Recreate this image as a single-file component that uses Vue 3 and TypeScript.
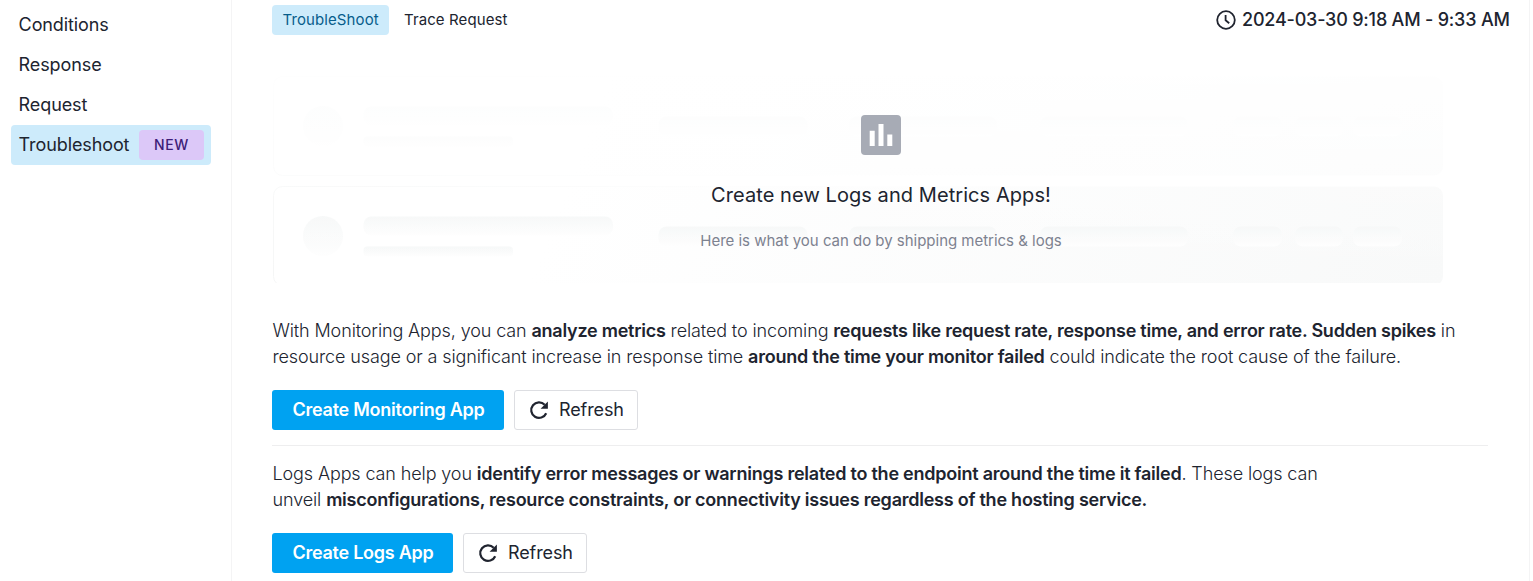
<script setup lang="ts">
interface NavItem {
  label: string
  active?: boolean
  badge?: string
}

const navItems: NavItem[] = [
  { label: 'Conditions' },
  { label: 'Response' },
  { label: 'Request' },
  { label: 'Troubleshoot', active: true, badge: 'NEW' },
]

const rows: number[] = [76.5, 186.5]
</script>

<template>
  <div class="page">
    <nav class="sidebar">
      <a v-for="item in navItems" :key="item.label" class="nav-item" :class="{ active: item.active }">
        <span class="nav-label">{{ item.label }}</span>
        <span v-if="item.badge" class="badge">{{ item.badge }}</span>
      </a>
    </nav>
    <main class="main">
      <header class="topbar">
        <div class="tabs">
          <a class="tab active">TroubleShoot</a>
          <a class="tab">Trace Request</a>
        </div>
        <div class="period">
          <svg class="clock" viewBox="0 0 20 20" fill="none" stroke="currentColor" stroke-width="1.8">
            <circle cx="10" cy="10" r="8.8" />
            <path d="M9.6 5v5.3l3.6 3" />
          </svg>
          <span>2024-03-30 9:18 AM - 9:33 AM</span>
        </div>
      </header>

      <section class="banner">
        <svg class="skeleton" viewBox="272 75 1216 208">
          <defs>
            <linearGradient id="bar" x1="0" y1="0" x2="0" y2="1">
              <stop offset="0" stop-color="#f5f7f7" />
              <stop offset="1" stop-color="#fefefe" />
            </linearGradient>
            <linearGradient id="shade" x1="600" y1="100" x2="1400" y2="420" gradientUnits="userSpaceOnUse">
              <stop offset="0" stop-color="#f8f9f9" stop-opacity="0" />
              <stop offset="1" stop-color="#f8f9f9" />
            </linearGradient>
            <linearGradient id="fade" x1="0" y1="75" x2="0" y2="283" gradientUnits="userSpaceOnUse">
              <stop offset="0" stop-color="#fff" stop-opacity="0.9" />
              <stop offset="0.5" stop-color="#fff" stop-opacity="0.62" />
              <stop offset="0.54" stop-color="#fff" stop-opacity="0.3" />
              <stop offset="1" stop-color="#fff" stop-opacity="0" />
            </linearGradient>
            <linearGradient id="edge" x1="0" y1="0" x2="1" y2="0">
              <stop offset="0" stop-color="#f5f6f6" />
              <stop offset="0.5" stop-color="#f5f6f6" stop-opacity="0" />
            </linearGradient>
          </defs>
          <g v-for="y in rows" :key="y">
            <rect x="273.5" :y="y" width="1169.5" height="99" rx="9" fill="url(#shade)" stroke="url(#edge)" />
            <circle cx="323" :cy="y + 49.5" r="20" fill="url(#bar)" />
            <rect x="363.5" :y="y + 30" width="249.5" height="19" rx="8" fill="url(#bar)" />
            <rect x="363.5" :y="y + 60" width="149.5" height="10" rx="4" fill="url(#bar)" />
            <rect x="658.5" :y="y + 40" width="149" height="20" rx="8" fill="url(#bar)" />
            <rect x="849" :y="y + 40" width="148" height="20" rx="8" fill="url(#bar)" />
            <rect x="1040" :y="y + 40" width="148" height="20" rx="8" fill="url(#bar)" />
            <rect x="1233" :y="y + 40" width="49" height="20" rx="8" fill="url(#bar)" />
            <rect x="1295" :y="y + 40" width="48" height="20" rx="8" fill="url(#bar)" />
            <rect x="1353" :y="y + 40" width="49" height="20" rx="8" fill="url(#bar)" />
          </g>
          <rect x="272" y="75" width="1216" height="208" fill="url(#fade)" />
        </svg>
        <div class="banner-content">
          <svg class="chart" viewBox="0 0 40 40">
            <rect width="40" height="40" rx="4" fill="#a7abb5" />
            <path d="M8.7 15.7h5V31h-5zM17.5 9h5v22h-5zM26.3 19.6h5V31h-5z" fill="#fff" />
          </svg>
          <h2>Create new Logs and Metrics Apps!</h2>
          <p>Here is what you can do by shipping metrics &amp; logs</p>
        </div>
      </section>

      <section class="block monitoring">
        <p>
          With Monitoring Apps, you can <b>analyze metrics</b> related to incoming
          <b>requests like request rate, response time, and error rate. Sudden spikes</b> in<br />
          resource usage or a significant increase in response time
          <b>around the time your monitor failed</b> could indicate the root cause of the failure.
        </p>
        <div class="actions">
          <button class="primary wide">Create Monitoring App</button>
          <button class="secondary">
            <svg viewBox="0 0 20 20"><path d="M17.2 13.2A7.8 7.8 0 1 1 15.7 4.7" fill="none" stroke="currentColor" stroke-width="2.2" /><path d="M18.9 1.4v7.3h-7.3z" fill="currentColor" /></svg>
            <span>Refresh</span>
          </button>
        </div>
      </section>

      <section class="block logs">
        <p>
          Logs Apps can help you
          <b>identify error messages or warnings related to the endpoint around the time it failed</b>. These logs can<br />
          unveil <b>misconfigurations, resource constraints, or connectivity issues regardless of the hosting service.</b>
        </p>
        <div class="actions">
          <button class="primary">Create Logs App</button>
          <button class="secondary">
            <svg viewBox="0 0 20 20"><path d="M17.2 13.2A7.8 7.8 0 1 1 15.7 4.7" fill="none" stroke="currentColor" stroke-width="2.2" /><path d="M18.9 1.4v7.3h-7.3z" fill="currentColor" /></svg>
            <span>Refresh</span>
          </button>
        </div>
      </section>
    </main>
  </div>
</template>

<style>
body {
  margin: 0;
  background: #fff;
  overflow: hidden;
}
</style>

<style scoped>
* {
  box-sizing: border-box;
}
.page {
  display: grid;
  grid-template-columns: 232px 1298px;
  height: 581px;
  font-family: Inter, "Liberation Sans", sans-serif;
  font-size: 18px;
  color: #20242f;
}
.sidebar {
  border-right: 1px solid #f4f4f5;
  padding: 5px 20px 0 11px;
}
.nav-item {
  display: flex;
  align-items: center;
  justify-content: space-between;
  height: 40px;
  padding: 0 7px 0 7.6px;
  border-radius: 4px;
}
.nav-label {
  padding-bottom: 2px;
  letter-spacing: -0.1px;
}
.nav-item.active {
  background: #cdebfb;
}
.badge {
  width: 65px;
  height: 30px;
  border-radius: 4px;
  background: #dcc8f8;
  color: #3e1d78;
  font-size: 14px;
  font-weight: 500;
  letter-spacing: 0.7px;
  line-height: 30px;
  text-align: center;
}
.main {
  border-right: 1px solid #f4f4f5;
  padding: 5px 41px 0 40px;
}
.topbar {
  display: flex;
  justify-content: space-between;
  height: 30px;
  margin-right: -21.7px;
}
.tabs {
  display: flex;
  gap: 5px;
}
.tab {
  height: 30px;
  padding: 0 10px;
  border-radius: 4px;
  font-size: 15px;
  line-height: 30px;
  letter-spacing: 0.1px;
}
.tab.active {
  width: 117px;
  padding-left: 10.5px;
  background: #cdebfb;
  color: #075d8b;
}
.period {
  display: flex;
  align-items: center;
  gap: 6px;
  font-weight: 500;
  letter-spacing: -0.2px;
  white-space: nowrap;
}
.period span {
  padding-bottom: 1px;
}
.clock {
  width: 20px;
  height: 20px;
}
.banner {
  display: grid;
  height: 208px;
  margin-top: 40px;
}
.skeleton,
.banner-content {
  grid-area: 1 / 1;
}
.skeleton {
  width: 1216px;
  height: 208px;
}
.banner-content {
  z-index: 1;
  display: flex;
  flex-direction: column;
  align-items: center;
  padding: 40px 0 0 2px;
}
.chart {
  width: 40px;
  height: 40px;
}
h2 {
  margin: 25px 0 0;
  font-size: 20px;
  font-weight: 400;
  line-height: 30px;
  letter-spacing: 0.07px;
}
.banner-content p {
  margin: 20px 0 0;
  font-size: 15px;
  line-height: 22px;
  color: #7d8290;
  letter-spacing: -0.02px;
}
.block p {
  margin: 0;
  padding-left: 0.5px;
  font-weight: 300;
  line-height: 26px;
  letter-spacing: -0.12px;
  white-space: nowrap;
}
.block b {
  font-weight: 600;
  letter-spacing: -0.24px;
}
.monitoring {
  margin-top: 35px;
  height: 128px;
  border-bottom: 1px solid #eeeeef;
}
.logs {
  padding-top: 15px;
}
.actions {
  display: flex;
  gap: 10px;
  margin-top: 20px;
}
button {
  height: 40px;
  padding: 0;
  border: 0;
  border-radius: 3px;
  font: inherit;
  color: inherit;
}
.primary {
  width: 181px;
  padding: 0 0 2px 1px;
  background: #00a2f1;
  color: #fff;
  font-weight: 600;
  letter-spacing: -0.26px;
}
.primary.wide {
  width: 232px;
}
.secondary {
  display: flex;
  align-items: center;
  width: 124px;
  padding-left: 14px;
  gap: 10px;
  border: 1px solid #dddee2;
  background: #fff;
  letter-spacing: -0.1px;
}
.secondary span {
  padding-bottom: 2px;
}
.secondary svg {
  width: 20px;
  height: 20px;
}
</style>
